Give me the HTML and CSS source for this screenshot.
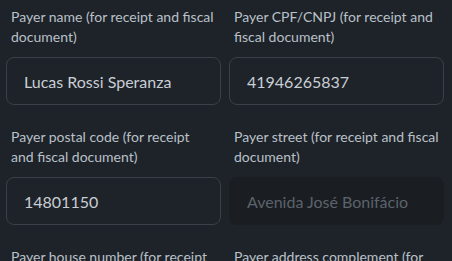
FILE: index.html
```html
<!DOCTYPE html>
<html>
<head>
<meta charset="utf-8">
<link rel="stylesheet" href="styles.css">
</head>
<body>
<div class="form">
  <div class="field">
    <label class="label">Payer name (for receipt and fiscal<br>document)</label>
    <div class="input">Lucas Rossi Speranza</div>
  </div>
  <div class="field">
    <label class="label">Payer CPF/CNPJ (for receipt and<br>fiscal document)</label>
    <div class="input">41946265837</div>
  </div>
  <div class="field">
    <label class="label">Payer postal code (for receipt<br>and fiscal document)</label>
    <div class="input">14801150</div>
  </div>
  <div class="field">
    <label class="label">Payer street (for receipt and fiscal<br>document)</label>
    <div class="input disabled">Avenida José Bonifácio</div>
  </div>
  <div class="field">
    <label class="label">Payer house number (for receipt<br>and fiscal document)</label>
    <div class="input"></div>
  </div>
  <div class="field">
    <label class="label">Payer address complement (for<br>receipt and fiscal document)</label>
    <div class="input"></div>
  </div>
</div>
</body>
</html>
```
FILE: styles.css
```css
html, body {
  margin: 0;
  padding: 0;
  background: #1e2329;
  overflow: hidden;
}
body {
  font-family: "Lato", "Noto Sans", sans-serif;
}
.form {
  display: grid;
  grid-template-columns: 215px 215px;
  column-gap: 8px;
  row-gap: 22px;
  padding: 7px 0 0 6px;
}
.field {
  display: flex;
  flex-direction: column;
}
.label {
  display: block;
  padding: 0 0 0 5px;
  font-size: 14px;
  line-height: 20px;
  color: #b9c0c8;
  margin-bottom: 10px;
  height: 40px;
  white-space: nowrap;
}
.input {
  box-sizing: border-box;
  height: 48px;
  border: 1px solid #3b4048;
  border-radius: 8px;
  padding: 0 17px;
  display: flex;
  align-items: center;
  font-size: 16px;
  color: #c9ced4;
}
.input.disabled {
  background: #1a1d22;
  border-color: #1a1d22;
  color: #5c636b;
}
```
